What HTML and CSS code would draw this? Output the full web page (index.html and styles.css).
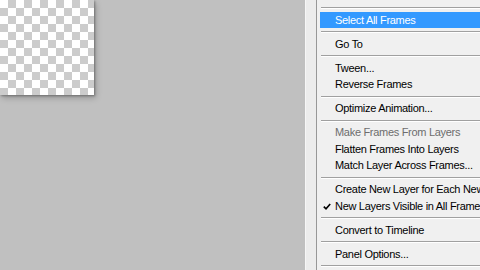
FILE: index.html
```html
<!DOCTYPE html>
<html lang="en">
<head>
  <meta charset="UTF-8" />
  <title>Animation Panel Menu</title>
  <link rel="stylesheet" href="styles.css">
</head>
<body>
  <div class="workspace">
    <!-- CANVAS -->
    <div class="stage">
      <div class="canvas"></div>
    </div>

    <!-- PANEL FLYOUT MENU -->
    <div class="panel">
      <ul class="menu">
        <li class="item">Paste Frames...</li>
        <li class="sep"></li>
        <li class="item active">Select All Frames</li>
        <li class="sep"></li>
        <li class="item">Go To</li>
        <li class="sep"></li>
        <li class="item">Tween...</li>
        <li class="item">Reverse Frames</li>
        <li class="sep"></li>
        <li class="item">Optimize Animation...</li>
        <li class="sep"></li>
        <li class="item disabled">Make Frames From Layers</li>
        <li class="item">Flatten Frames Into Layers</li>
        <li class="item">Match Layer Across Frames...</li>
        <li class="sep"></li>
        <li class="item">Create New Layer for Each New Frame</li>
        <li class="item checked">
          <svg class="check" width="8" height="7" viewBox="0 0 8 7" aria-hidden="true"><path d="M0.8 3.6 L3 5.8 L7.2 0.9" fill="none" stroke="#000" stroke-width="1.6"/></svg>
          New Layers Visible in All Frames
        </li>
        <li class="sep"></li>
        <li class="item">Convert to Timeline</li>
        <li class="sep"></li>
        <li class="item">Panel Options...</li>
        <li class="sep"></li>
      </ul>
    </div>
  </div>
</body>
</html>
```

FILE: styles.css
```css
/* Reset */
*, *::before, *::after {
  box-sizing: border-box;
}
body, ul {
  margin: 0;
  padding: 0;
}
body {
  width: 480px;
  height: 270px;
  overflow: hidden;
  background: #c0c0c0;
  font-family: 'Liberation Sans', Arial, sans-serif;
  font-size: 11px;
  color: #000;
}

.workspace {
  display: grid;
  grid-template-columns: 1fr 175px;
  height: 270px;
}

/* CANVAS */
.stage {
  padding: 0;
}
.canvas {
  width: 94px;
  height: 95px;
  background: repeating-conic-gradient(#cccccc 0 25%, #ffffff 0 50%) 0 0 / 16px 16px;
  box-shadow: 1px 1px 2px rgba(0, 0, 0, 0.3), 2px 3px 6px rgba(0, 0, 0, 0.22);
}

/* PANEL */
.panel {
  background: #ececec;
  border-left: 1px solid #f6f6f6;
  padding-left: 10px;
  overflow: hidden;
}
.menu {
  list-style: none;
  width: 260px;
  margin-top: -12.5px;
  background: #f0f0f0;
  border-left: 1px solid #979797;
}
.item {
  position: relative;
  height: 16.5px;
  line-height: 17px;
  margin-left: 3px;
  padding-left: 15px;
  letter-spacing: -0.3px;
  white-space: nowrap;
}
.item.active {
  background: #3399ff;
  color: #fff;
}
.item.disabled {
  color: #6d6d6d;
}
.check {
  position: absolute;
  left: 3px;
  top: 5px;
}
.sep {
  height: 7.5px;
  margin-left: 4px;
  padding-top: 3px;
}
.sep::before {
  content: "";
  display: block;
  height: 1px;
  background: #a0a0a0;
  border-bottom: 1px solid #ffffff;
  box-sizing: content-box;
}
```
